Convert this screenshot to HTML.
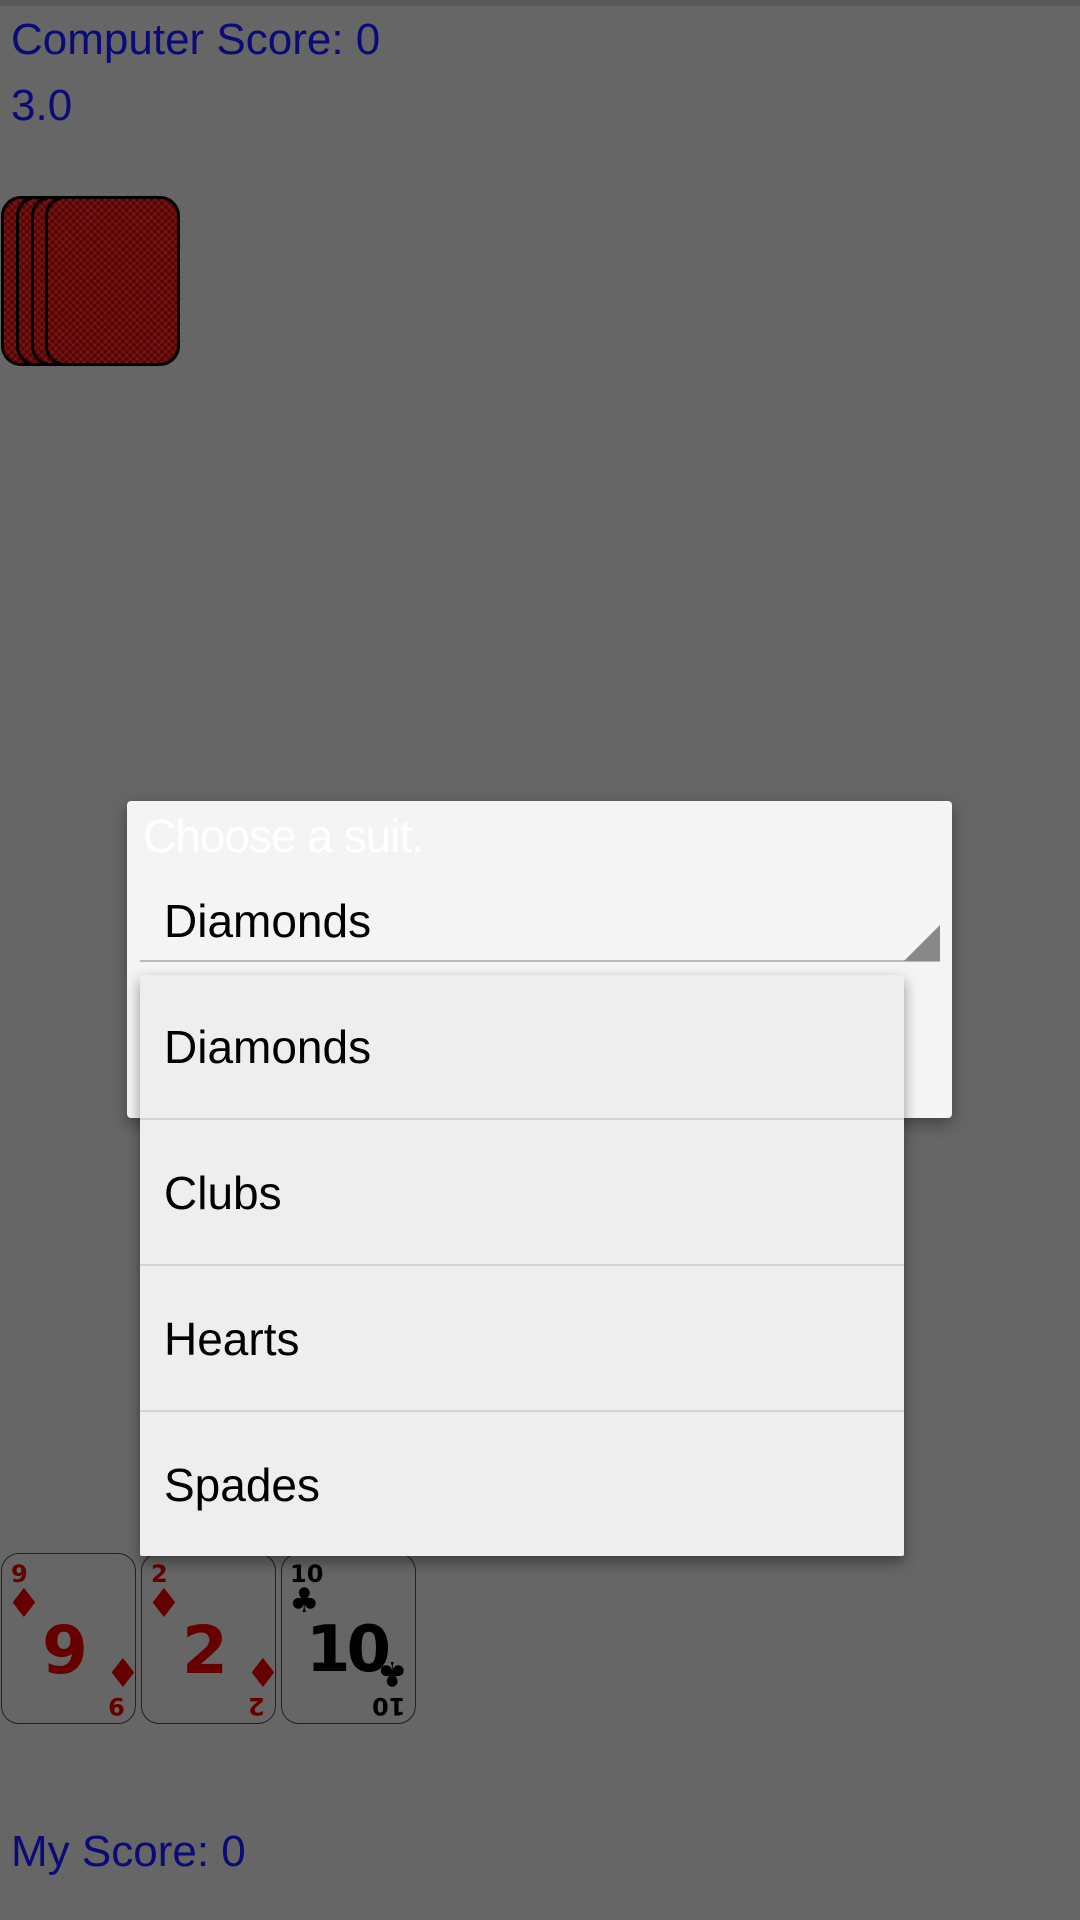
<!DOCTYPE html>
<html><head><meta charset="utf-8"><style>
*{margin:0;padding:0;box-sizing:border-box}
body{width:1080px;height:1920px;background:#666;position:relative;overflow:hidden;font-family:"Liberation Sans",sans-serif}
.top{position:absolute;left:0;top:0;width:1080px;height:6px;background:#5a5a5a}
.t{position:absolute;color:#0a0a78;font-size:44px;line-height:1;white-space:nowrap}
.back{position:absolute;top:196px;width:135px;height:170px;border:3px solid #000;border-radius:20px;background:#5c0000;
background-image:repeating-linear-gradient(45deg,rgba(255,255,255,.06) 0 2px,transparent 2px 5px),repeating-linear-gradient(-45deg,rgba(255,255,255,.06) 0 2px,transparent 2px 5px)}
.card{position:absolute;top:1553px;width:135px;height:171px;border:1px solid #222;border-radius:18px;overflow:hidden}
.card span{position:absolute;font-weight:bold;font-family:"DejaVu Sans",sans-serif;line-height:1}
.red{color:#660000}.blk{color:#000}
.dlg{position:absolute;left:127px;top:801px;width:825px;height:317px;background:#f4f4f4;border-radius:4px;box-shadow:0 6px 16px rgba(0,0,0,.35)}
.menu{position:absolute;left:140px;top:975px;width:764px;height:581px;background:#eee;box-shadow:0 6px 14px rgba(0,0,0,.4);border-radius:2px}
.item{position:absolute;left:24px;font-size:46px;color:#000;line-height:1}
.div{position:absolute;left:0;width:764px;height:2px;background:#d4d4d4}
</style></head><body>
<div class="top"></div>
<div class="t" style="left:11px;top:18px">Computer Score: 0</div>
<div class="t" style="left:11px;top:84px">3.0</div>
<div class="back" style="left:1px"></div>
<div class="back" style="left:16px"></div>
<div class="back" style="left:31px"></div>
<div class="back" style="left:45px"></div>

<div class="card" style="left:1px">
<span class="red" style="left:9px;top:8px;font-size:24px">9</span>
<span class="red" style="left:4px;top:30px;font-size:40px">♦</span>
<span class="red" style="left:40px;top:64px;font-size:66px">9</span>
<span class="red" style="left:103px;top:100px;font-size:40px">♦</span>
<span class="red" style="left:106px;top:140px;font-size:24px;transform:rotate(180deg)">9</span>
</div>
<div class="card" style="left:141px">
<span class="red" style="left:9px;top:8px;font-size:24px">2</span>
<span class="red" style="left:4px;top:30px;font-size:40px">♦</span>
<span class="red" style="left:40px;top:64px;font-size:66px">2</span>
<span class="red" style="left:103px;top:100px;font-size:40px">♦</span>
<span class="red" style="left:106px;top:140px;font-size:24px;transform:rotate(180deg)">2</span>
</div>
<div class="card" style="left:281px">
<span class="blk" style="left:8px;top:8px;font-size:24px">10</span>
<span class="blk" style="left:7px;top:30px;font-size:34px">♣</span>
<span class="blk" style="left:24px;top:64px;font-size:64px;letter-spacing:-4px">10</span>
<span class="blk" style="left:95px;top:102px;font-size:34px;transform:rotate(180deg)">♣</span>
<span class="blk" style="left:90px;top:140px;font-size:24px;transform:rotate(180deg)">10</span>
</div>

<div class="t" style="left:11px;top:1830px">My Score: 0</div>

<div class="dlg">
<div style="position:absolute;left:16px;top:8px;font-size:46px;color:#fff;letter-spacing:-1px">Choose a suit.</div>
<div style="position:absolute;left:37px;top:93px;font-size:46px;color:#000">Diamonds</div>
<div style="position:absolute;left:13px;top:159px;width:800px;height:2px;background:#bbb"></div>
<div style="position:absolute;left:777px;top:124px;width:0;height:0;border-left:36px solid transparent;border-bottom:36px solid #888"></div>
</div>
<div class="menu">
<div class="item" style="top:49px">Diamonds</div>
<div class="div" style="top:143px"></div>
<div class="item" style="top:195px">Clubs</div>
<div class="div" style="top:289px"></div>
<div class="item" style="top:341px">Hearts</div>
<div class="div" style="top:435px"></div>
<div class="item" style="top:487px">Spades</div>
</div>
</body></html>
